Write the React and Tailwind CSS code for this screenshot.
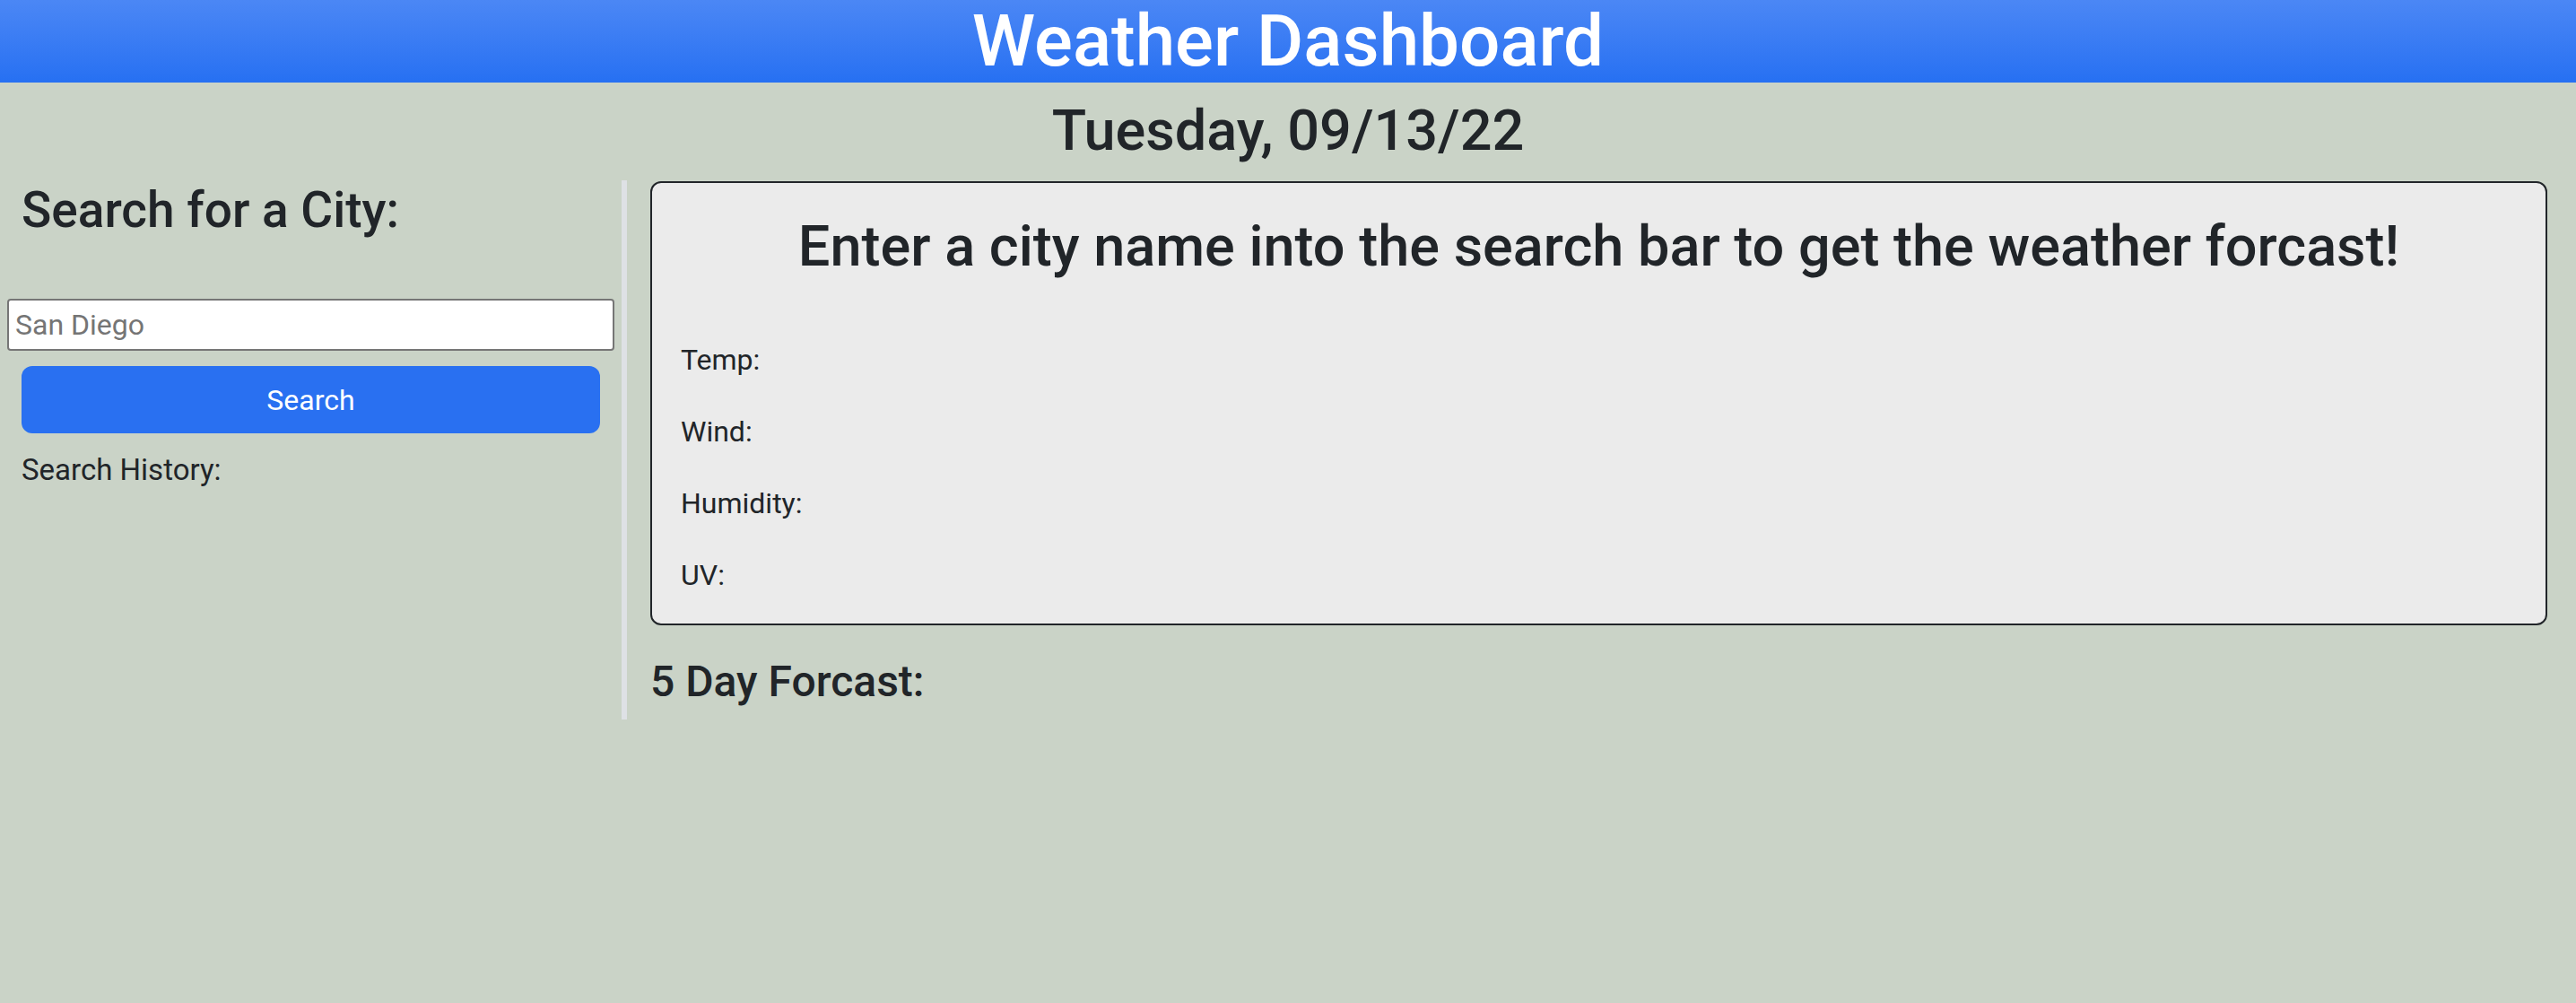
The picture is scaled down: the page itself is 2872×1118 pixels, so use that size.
export default function App() {
  return (
    <div className="min-h-screen bg-[#cad3c7] text-[#212529] font-['Roboto',sans-serif]">
      <header className="h-[92px] flex items-center justify-center bg-linear-to-b from-[#4b87f5] to-[#2670f2]">
        <h1 className="text-[80px] leading-none font-medium text-white">Weather Dashboard</h1>
      </header>

      <h2 className="mt-[16px] mb-[16px] h-[77px] flex items-center justify-center text-[63px] font-medium">
        Tuesday, 09/13/22
      </h2>

      <div className="flex">
        {/* search column */}
        <aside className="w-[699px] shrink-0 border-r-[6px] border-[#dee1e5]">
          <h3 className="px-[24px] text-[55px] leading-[67px] font-medium">Search for a City:</h3>
          <input
            type="text"
            placeholder="San Diego"
            className="mt-[65px] ml-[8px] block w-[677px] h-[58px] border-2 border-[#767676] rounded-[4px] bg-white px-[7px] text-[32px] placeholder:text-[#757575] outline-none"
          />
          <button className="mt-[17px] ml-[24px] block w-[645px] h-[75px] rounded-[12px] bg-[#2970f1] text-white text-[32px]">
            Search
          </button>
          <p className="mt-[17px] px-[24px] text-[33px] leading-[48px]">Search History:</p>
        </aside>

        {/* forecast column */}
        <main className="flex-1 pl-[26px] pr-[32px]">
          <section className="mt-[1px] border-2 border-[#212529] rounded-[12px] bg-[#ebebeb] px-[32px] pt-[32px] pb-[30px]">
            <h2 className="text-center text-[63px] leading-[77px] font-medium">
              Enter a city name into the search bar to get the weather forcast!
            </h2>
            <div className="mt-[64px] flex flex-col gap-[32px] text-[32px] leading-[48px]">
              <p>Temp:</p>
              <p>Wind:</p>
              <p>Humidity:</p>
              <p>UV:</p>
            </div>
          </section>
          <h4 className="mt-[34px] mb-[13px] text-[48px] leading-[58px] font-medium">5 Day Forcast:</h4>
        </main>
      </div>
    </div>
  );
}
